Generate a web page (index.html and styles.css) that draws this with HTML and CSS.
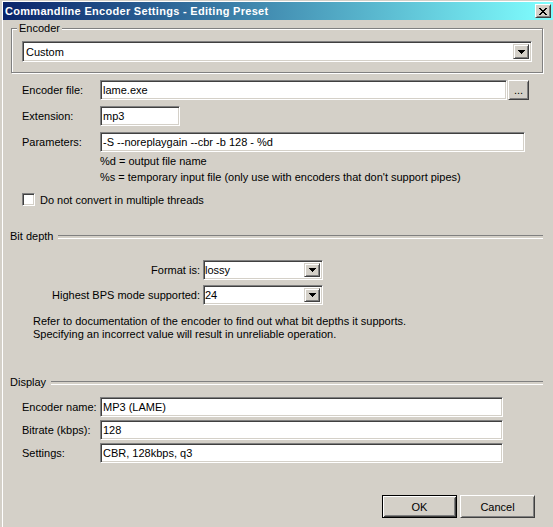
FILE: index.html
```html
<!DOCTYPE html>
<html>
<head>
<meta charset="utf-8">
<title>Commandline Encoder Settings - Editing Preset</title>
<link rel="stylesheet" href="styles.css">
</head>
<body>
<div class="window">
  <div class="frame">
    <div class="titlebar">
      <span class="title">Commandline Encoder Settings - Editing Preset</span>
      <button class="close" type="button" aria-label="Close">
        <svg width="8" height="7" viewBox="0 0 8 7" shape-rendering="crispEdges">
          <rect x="0" y="0" width="2" height="1"/><rect x="6" y="0" width="2" height="1"/>
          <rect x="1" y="1" width="2" height="1"/><rect x="5" y="1" width="2" height="1"/>
          <rect x="2" y="2" width="4" height="1"/>
          <rect x="3" y="3" width="2" height="1"/>
          <rect x="2" y="4" width="4" height="1"/>
          <rect x="1" y="5" width="2" height="1"/><rect x="5" y="5" width="2" height="1"/>
          <rect x="0" y="6" width="2" height="1"/><rect x="6" y="6" width="2" height="1"/>
        </svg>
      </button>
    </div>

    <div class="client">
      <fieldset class="group">
        <legend>Encoder</legend>
        <div class="combo combo-encoder">
          <span class="combo-text">Custom</span>
          <span class="drop"><svg width="7" height="4" viewBox="0 0 7 4" shape-rendering="crispEdges"><rect x="0" y="0" width="7" height="1"/><rect x="1" y="1" width="5" height="1"/><rect x="2" y="2" width="3" height="1"/><rect x="3" y="3" width="1" height="1"/></svg></span>
        </div>
      </fieldset>

      <div class="form">
        <label class="lbl">Encoder file:</label>
        <div class="cell">
          <input class="edit w-file" type="text" value="lame.exe" readonly>
          <button class="btn browse" type="button">...</button>
        </div>
        <label class="lbl">Extension:</label>
        <div class="cell"><input class="edit w-ext" type="text" value="mp3" readonly></div>
        <label class="lbl">Parameters:</label>
        <div class="cell"><input class="edit w-params" type="text" value="-S --noreplaygain --cbr -b 128 - %d" readonly></div>
        <div class="notes">
          <div>%d = output file name</div>
          <div>%s = temporary input file (only use with encoders that don't support pipes)</div>
        </div>
      </div>

      <div class="check-row">
        <span class="checkbox"></span>
        <span>Do not convert in multiple threads</span>
      </div>

      <div class="sep sep-bit">Bit depth</div>

      <div class="bd-grid">
        <span class="lbl-r">Format is:</span>
        <div class="combo combo-small">
          <span class="combo-text">lossy</span>
          <span class="drop"><svg width="7" height="4" viewBox="0 0 7 4" shape-rendering="crispEdges"><rect x="0" y="0" width="7" height="1"/><rect x="1" y="1" width="5" height="1"/><rect x="2" y="2" width="3" height="1"/><rect x="3" y="3" width="1" height="1"/></svg></span>
        </div>
        <span class="lbl-r">Highest BPS mode supported:</span>
        <div class="combo combo-small">
          <span class="combo-text">24</span>
          <span class="drop"><svg width="7" height="4" viewBox="0 0 7 4" shape-rendering="crispEdges"><rect x="0" y="0" width="7" height="1"/><rect x="1" y="1" width="5" height="1"/><rect x="2" y="2" width="3" height="1"/><rect x="3" y="3" width="1" height="1"/></svg></span>
        </div>
      </div>

      <div class="refer">
        <div>Refer to documentation of the encoder to find out what bit depths it supports.</div>
        <div>Specifying an incorrect value will result in unreliable operation.</div>
      </div>

      <div class="sep sep-display">Display</div>

      <div class="form form-display">
        <label class="lbl">Encoder name:</label>
        <div class="cell"><input class="edit w-disp" type="text" value="MP3 (LAME)" readonly></div>
        <label class="lbl">Bitrate (kbps):</label>
        <div class="cell"><input class="edit w-disp" type="text" value="128" readonly></div>
        <label class="lbl">Settings:</label>
        <div class="cell"><input class="edit w-disp" type="text" value="CBR, 128kbps, q3" readonly></div>
      </div>

      <div class="buttons">
        <button class="btn push default" type="button">OK</button>
        <button class="btn push" type="button">Cancel</button>
      </div>
    </div>
  </div>
</div>
</body>
</html>
```

FILE: styles.css
```css
* { box-sizing: border-box; }

body {
  margin: 0;
  background: #d4d0c8;
  font: 11px "Liberation Sans", Arial, sans-serif;
  color: #000;
}

.window {
  width: 553px;
  height: 527px;
  padding: 1px 0 0 2px;
  background: #d4d0c8;
  overflow: hidden;
}

.frame {
  height: 100%;
  border-left: 1px solid #fff;
  border-top: 1px solid #fff;
}

.titlebar {
  height: 18px;
  display: flex;
  align-items: center;
  padding-left: 2px;
  background: linear-gradient(to right, #0a246a, #80ffff);
}

.title {
  flex: 1;
  color: #fff;
  font-weight: bold;
  font-size: 11px;
  letter-spacing: 0.3px;
  white-space: nowrap;
}

.close {
  width: 16px;
  height: 14px;
  margin-right: 2px;
  padding: 0;
  display: flex;
  align-items: center;
  justify-content: center;
  background: #d4d0c8;
  border: 1px solid;
  border-color: #fff #404040 #404040 #fff;
  box-shadow: inset 1px 1px #d4d0c8, inset -1px -1px #808080;
}

.close svg { display: block; fill: #000; }

.client {
  padding-top: 2px;
}

/* Group box */
.group {
  margin: 0 10px 0 8px;
  padding: 0 10px 10px;
  border: 1px solid #808080;
  box-shadow: 1px 1px 0 #fff, inset 1px 1px 0 #fff;
  min-width: 0;
}

.group legend {
  margin-left: -5px;
  padding: 0 2px;
  line-height: 13px;
  background: #d4d0c8;
}

/* Combo boxes */
.combo {
  display: flex;
  align-items: center;
  background: #fff;
  border: 1px solid;
  border-color: #808080 #fff #fff #808080;
  box-shadow: inset 1px 1px #404040, inset -1px -1px #d4d0c8;
  padding: 2px;
}

.combo-text {
  flex: 1;
  white-space: nowrap;
}

.drop {
  width: 16px;
  height: 100%;
  display: flex;
  align-items: center;
  justify-content: center;
  background: #d4d0c8;
  border: 1px solid;
  border-color: #d4d0c8 #404040 #404040 #d4d0c8;
  box-shadow: inset 1px 1px #fff, inset -1px -1px #808080;
}

.drop svg { display: block; fill: #000; }

.combo-encoder {
  height: 21px;
  margin-top: 6px;
  padding-left: 3px;
}

.combo-small {
  width: 120px;
  height: 20px;
  padding-left: 1px;
}

/* Forms */
.form {
  display: grid;
  grid-template-columns: 78px 1fr;
  row-gap: 6px;
  align-items: center;
  margin-top: 7px;
  padding-left: 19px;
}

.lbl { white-space: nowrap; }

.cell {
  display: flex;
  align-items: center;
}

.edit {
  height: 20px;
  margin: 0;
  padding: 0 2px;
  font: inherit;
  color: #000;
  background: #fff;
  border: 1px solid;
  border-color: #808080 #fff #fff #808080;
  box-shadow: inset 1px 1px #404040, inset -1px -1px #d4d0c8;
  outline: none;
}

.w-file { width: 407px; }
.w-ext { width: 80px; }
.w-params { width: 425px; }
.w-disp { width: 403px; }

.btn {
  font: inherit;
  color: #000;
  background: #d4d0c8;
  padding: 0;
  margin: 0;
}

.browse {
  width: 21px;
  height: 20px;
  margin-left: 1px;
  border: 1px solid;
  border-color: #fff #404040 #404040 #fff;
  box-shadow: inset 1px 1px #d4d0c8, inset -1px -1px #808080;
  line-height: 14px;
}

.notes {
  grid-column: 2;
  margin-top: -5px;
  line-height: 16px;
  white-space: nowrap;
}

.check-row {
  display: flex;
  align-items: center;
  gap: 5px;
  margin-top: 8px;
  padding-left: 19px;
}

.checkbox {
  width: 13px;
  height: 13px;
  background: #fff;
  border: 1px solid;
  border-color: #808080 #fff #fff #808080;
  box-shadow: inset 1px 1px #404040, inset -1px -1px #d4d0c8;
}

/* Separators */
.sep {
  display: flex;
  align-items: center;
  line-height: 13px;
  padding-left: 7px;
  margin-right: 10px;
}

.sep::after {
  content: "";
  flex: 1;
  height: 2px;
  margin-left: 5px;
  border-top: 1px solid #808080;
  border-bottom: 1px solid #fff;
}

.sep-bit { margin-top: 24px; }
.sep-display { margin-top: 35px; }

/* Bit depth */
.bd-grid {
  display: grid;
  grid-template-columns: 197px 120px;
  column-gap: 3px;
  row-gap: 5px;
  align-items: center;
  margin-top: 17px;
}

.lbl-r {
  text-align: right;
  white-space: nowrap;
}

.refer {
  margin-top: 10px;
  padding-left: 30px;
  line-height: 13px;
  white-space: nowrap;
}

.form-display {
  row-gap: 3px;
  margin-top: 8px;
}

/* Buttons */
.buttons {
  display: flex;
  justify-content: flex-end;
  gap: 3px;
  padding-right: 18px;
  margin-top: 32px;
}

.push {
  width: 75px;
  height: 23px;
  border: 1px solid;
  border-color: #fff #404040 #404040 #fff;
  box-shadow: inset 1px 1px #d4d0c8, inset -1px -1px #808080;
}

.push.default {
  border: 1px solid #000;
  box-shadow: inset 1px 1px #fff, inset -1px -1px #404040, inset 2px 2px #d4d0c8, inset -2px -2px #808080;
}
```
